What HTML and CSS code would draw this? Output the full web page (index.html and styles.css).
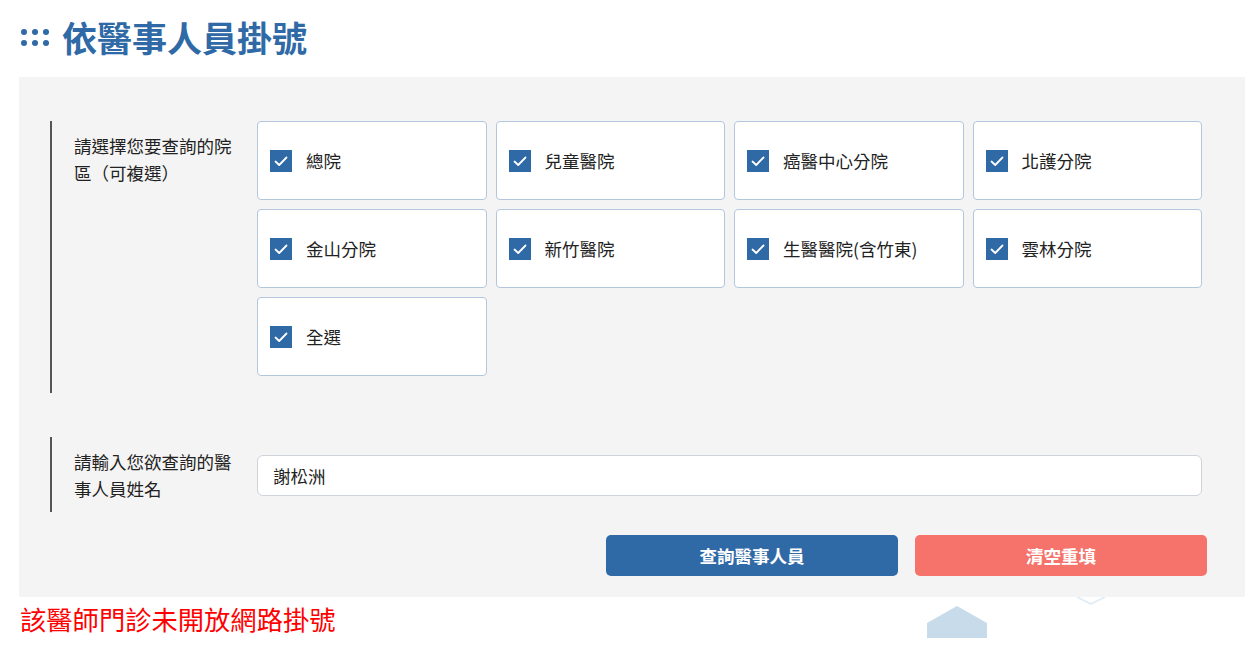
FILE: index.html
```html
<!DOCTYPE html>
<html lang="zh-Hant">
<head>
<meta charset="utf-8">
<title>依醫事人員掛號</title>
<link rel="stylesheet" href="styles.css">
</head>
<body>
<div class="page">
  <h1 class="title">
    <span class="dots"><i></i><i></i><i></i><i></i><i></i><i></i></span>
    <span class="title-text">依醫事人員掛號</span>
  </h1>

  <div class="panel">
    <div class="field field-branches">
      <div class="field-label">請選擇您要查詢的院區（可複選）</div>
      <div class="options">
        <label class="option"><span class="box"><svg viewBox="0 0 22 22"><path d="M5.5 11.5 L9.2 15 L16.5 7.5"/></svg></span><span class="opt-text">總院</span></label>
        <label class="option"><span class="box"><svg viewBox="0 0 22 22"><path d="M5.5 11.5 L9.2 15 L16.5 7.5"/></svg></span><span class="opt-text">兒童醫院</span></label>
        <label class="option"><span class="box"><svg viewBox="0 0 22 22"><path d="M5.5 11.5 L9.2 15 L16.5 7.5"/></svg></span><span class="opt-text">癌醫中心分院</span></label>
        <label class="option"><span class="box"><svg viewBox="0 0 22 22"><path d="M5.5 11.5 L9.2 15 L16.5 7.5"/></svg></span><span class="opt-text">北護分院</span></label>
        <label class="option"><span class="box"><svg viewBox="0 0 22 22"><path d="M5.5 11.5 L9.2 15 L16.5 7.5"/></svg></span><span class="opt-text">金山分院</span></label>
        <label class="option"><span class="box"><svg viewBox="0 0 22 22"><path d="M5.5 11.5 L9.2 15 L16.5 7.5"/></svg></span><span class="opt-text">新竹醫院</span></label>
        <label class="option"><span class="box"><svg viewBox="0 0 22 22"><path d="M5.5 11.5 L9.2 15 L16.5 7.5"/></svg></span><span class="opt-text">生醫醫院(含竹東)</span></label>
        <label class="option"><span class="box"><svg viewBox="0 0 22 22"><path d="M5.5 11.5 L9.2 15 L16.5 7.5"/></svg></span><span class="opt-text">雲林分院</span></label>
        <label class="option"><span class="box"><svg viewBox="0 0 22 22"><path d="M5.5 11.5 L9.2 15 L16.5 7.5"/></svg></span><span class="opt-text">全選</span></label>
      </div>
    </div>

    <div class="field field-name">
      <div class="field-label">請輸入您欲查詢的醫事人員姓名</div>
      <div class="input-wrap">
        <div class="text-input">謝松洲</div>
      </div>
    </div>

    <div class="actions">
      <button class="btn btn-primary">查詢醫事人員</button>
      <button class="btn btn-danger">清空重填</button>
    </div>
  </div>

  <p class="notice">該醫師門診未開放網路掛號</p>

  <svg class="deco-house" viewBox="0 0 60 32"><polygon points="30,0 60,17 60,32 0,32 0,17"/></svg>
  <svg class="deco-chevron" viewBox="0 0 30 8"><polyline points="1,0 15,7 29,0"/></svg>
</div>
</body>
</html>
```

FILE: styles.css
```css
html, body {
  margin: 0;
  padding: 0;
  background: #ffffff;
}

body {
  font-family: "Noto Sans CJK TC", "Noto Sans", "Liberation Sans", sans-serif;
  color: #222222;
}

.page {
  position: relative;
  width: 1258px;
  height: 655px;
  overflow: hidden;
}

.title {
  margin: 0;
  height: 77px;
  display: flex;
  align-items: center;
  padding-left: 21px;
  box-sizing: border-box;
  padding-bottom: 4px;
}

.dots {
  display: grid;
  grid-template-columns: repeat(3, 6px);
  grid-template-rows: repeat(2, 6px);
  column-gap: 5px;
  row-gap: 5px;
  margin-right: 13px;
  margin-top: 2px;
}

.dots i {
  display: block;
  width: 6px;
  height: 6px;
  border-radius: 50%;
  background: #2f69a6;
}

.title-text {
  font-size: 35px;
  font-weight: 700;
  color: #2f69a6;
  line-height: 1;
}

.panel {
  margin-left: 19px;
  width: 1226px;
  background: #f4f4f4;
  padding: 44px 43px 21px 31px;
  box-sizing: border-box;
}

.field {
  display: flex;
  align-items: flex-start;
  border-left: 2px solid #555555;
}

.field-branches {
  padding-bottom: 17px;
}

.field-name {
  margin-top: 44px;
  height: 75px;
  box-sizing: border-box;
}

.field-label {
  width: 205px;
  flex-shrink: 0;
  box-sizing: border-box;
  padding: 11px 20px 0 22px;
  font-size: 17.5px;
  line-height: 27px;
  color: #222222;
}

.options {
  flex: 1;
  display: grid;
  grid-template-columns: repeat(4, 1fr);
  gap: 9px;
}

.option {
  height: 79px;
  box-sizing: border-box;
  background: #ffffff;
  border: 1px solid #b3c6dc;
  border-radius: 4px;
  display: flex;
  align-items: center;
  padding-left: 12px;
}

.box {
  width: 22px;
  height: 22px;
  background: #2f69a6;
  display: flex;
  flex-shrink: 0;
  margin-right: 14px;
}

.box svg {
  width: 22px;
  height: 22px;
}

.box path {
  fill: none;
  stroke: #ffffff;
  stroke-width: 1.8;
  stroke-linecap: round;
  stroke-linejoin: round;
}

.opt-text {
  font-size: 17.5px;
  color: #222222;
}

.input-wrap {
  flex: 1;
  padding-top: 18px;
}

.text-input {
  height: 41px;
  box-sizing: border-box;
  background: #ffffff;
  border: 1px solid #cfd3da;
  border-radius: 6px;
  padding-left: 15px;
  display: flex;
  align-items: center;
  font-size: 17.5px;
  color: #222222;
}

.actions {
  display: flex;
  justify-content: flex-end;
  gap: 17px;
  margin-top: 23px;
  margin-right: -5px;
}

.btn {
  width: 292px;
  height: 41px;
  border: none;
  border-radius: 5px;
  color: #ffffff;
  font-family: "Noto Sans CJK TC", "Noto Sans", sans-serif;
  font-size: 17.5px;
  font-weight: 700;
  padding: 0;
}

.btn-primary {
  background: #2f69a6;
}

.btn-danger {
  background: #f5736b;
}

.notice {
  margin: 3px 0 0 20px;
  font-size: 26.3px;
  line-height: 38px;
  color: #ff0000;
}

.deco-house {
  position: absolute;
  left: 927px;
  top: 606px;
  width: 60px;
  height: 32px;
}

.deco-house polygon {
  fill: #c7dbea;
}

.deco-chevron {
  position: absolute;
  left: 1076px;
  top: 597px;
  width: 30px;
  height: 8px;
}

.deco-chevron polyline {
  fill: none;
  stroke: #e6eef6;
  stroke-width: 2;
}
```
